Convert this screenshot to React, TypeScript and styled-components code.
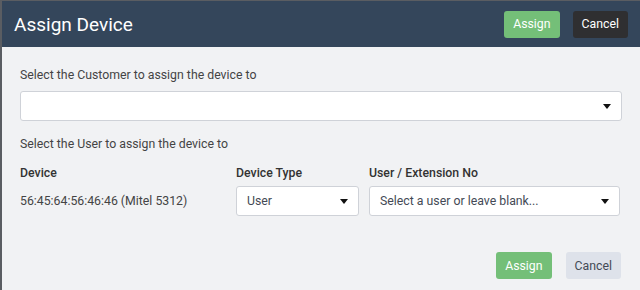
import React from 'react';
import styled, { createGlobalStyle } from 'styled-components';

const GlobalStyle = createGlobalStyle`
  html, body {
    margin: 0;
    padding: 0;
    background: #f1f2f4;
  }
  body {
    font-family: Roboto, "Liberation Sans", sans-serif;
  }
`;

const Dialog = styled.div`
  width: 640px;
  height: 290px;
  box-sizing: border-box;
  border-left: 2px solid #5a5d62;
  border-top: 1px solid #5a5d62;
  background-color: #f1f2f4;
  display: flex;
  flex-direction: column;
`;

const Header = styled.div`
  height: 46px;
  background-color: #34465b;
  display: flex;
  align-items: center;
  padding: 0 12px 0 12px;
`;

const Title = styled.h1`
  flex: 1;
  margin: 0;
  font-size: 19px;
  font-weight: 400;
  color: #ffffff;
`;

const HeaderActions = styled.div`
  display: flex;
  gap: 13px;
`;

const Button = styled.button<{ $variant: 'assign' | 'dark' | 'light' }>`
  height: 27px;
  padding: 0 9px;
  border: none;
  border-radius: 3px;
  font-family: Roboto, "Liberation Sans", sans-serif;
  font-size: 12.3px;
  cursor: pointer;
  background-color: ${p => (p.$variant === 'assign' ? '#74bf78' : p.$variant === 'dark' ? '#2f2f31' : '#dee2ea')};
  color: ${p => (p.$variant === 'light' ? '#444a55' : '#ffffff')};
`;

const Body = styled.div`
  flex: 1;
  padding: 21px 18px 0 18px;
  display: flex;
  flex-direction: column;
`;

const Label = styled.div<{ $gap?: number }>`
  font-size: 12.3px;
  color: #444444;
  line-height: 14px;
  margin-top: ${p => p.$gap ?? 0}px;
`;

const SelectBox = styled.div<{ $width?: number }>`
  box-sizing: border-box;
  height: 30px;
  ${p => (p.$width ? `width: ${p.$width}px;` : 'width: 100%;')}
  background: #ffffff;
  border: 1px solid #cfd2d8;
  border-radius: 3px;
  display: flex;
  align-items: center;
  padding: 0 10px 0 10px;
  font-size: 12.3px;
  color: #444a55;
`;

const SelectText = styled.span`
  flex: 1;
`;

const Caret = styled.span`
  width: 0;
  height: 0;
  border-left: 4.5px solid transparent;
  border-right: 4.5px solid transparent;
  border-top: 5px solid #111111;
`;

const FieldWrap = styled.div`
  margin-top: 9px;
`;

const Grid = styled.div`
  display: grid;
  grid-template-columns: 216px 133px 251px;
  row-gap: 6px;
  margin-top: 15px;
  align-items: center;
`;

const HeadCell = styled.div`
  font-size: 12.3px;
  font-weight: 500;
  color: #333333;
`;

const ValueCell = styled.div`
  font-size: 12.3px;
  color: #444444;
`;

const Footer = styled.div`
  display: flex;
  justify-content: flex-end;
  gap: 14px;
  margin-top: 36px;
  padding-right: 1px;
`;

const Caretted: React.FC<{ text?: string; width?: number }> = ({ text, width }) => (
  <SelectBox $width={width}>
    <SelectText>{text}</SelectText>
    <Caret />
  </SelectBox>
);

export default function App() {
  return (
    <>
      <GlobalStyle />
      <Dialog>
        <Header>
          <Title>Assign Device</Title>
          <HeaderActions>
            <Button $variant="assign">Assign</Button>
            <Button $variant="dark">Cancel</Button>
          </HeaderActions>
        </Header>
        <Body>
          <Label>Select the Customer to assign the device to</Label>
          <FieldWrap>
            <Caretted />
          </FieldWrap>
          <Label $gap={16}>Select the User to assign the device to</Label>
          <Grid>
            <HeadCell>Device</HeadCell>
            <HeadCell>Device Type</HeadCell>
            <HeadCell>User / Extension No</HeadCell>
            <ValueCell>56:45:64:56:46:46 (Mitel 5312)</ValueCell>
            <Caretted text="User" width={123} />
            <Caretted text="Select a user or leave blank..." width={251} />
          </Grid>
          <Footer>
            <Button $variant="assign">Assign</Button>
            <Button $variant="light">Cancel</Button>
          </Footer>
        </Body>
      </Dialog>
    </>
  );
}
